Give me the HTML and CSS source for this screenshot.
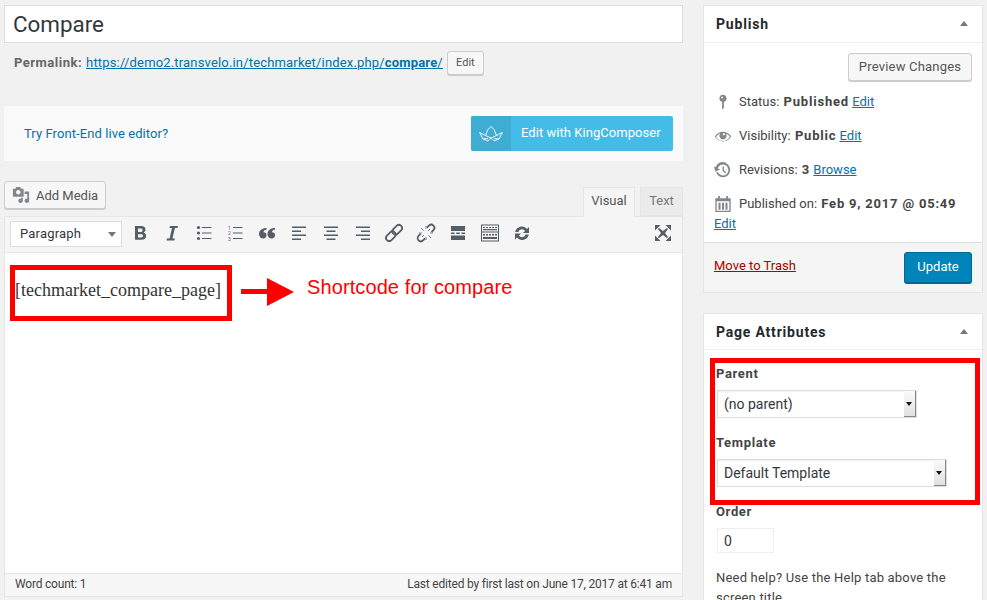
FILE: index.html
```html
<!DOCTYPE html>
<html lang="en">
<head>
<meta charset="utf-8">
<title>Edit Page</title>
<link rel="stylesheet" href="styles.css">
</head>
<body>
<div class="page">
  <main class="main">
    <input class="title" value="Compare" aria-label="Title">
    <div class="permalink">
      <strong class="perm-label">Permalink:</strong>
      <a class="link perm-url" href="#">https://demo2.transvelo.in/techmarket/index.php/<b>compare</b>/</a>
      <button class="btn btn-small">Edit</button>
    </div>
    <div class="kc-bar">
      <a class="kc-try" href="#">Try Front-End live editor?</a>
      <a class="kc-btn" href="#">
        <span class="kc-icon">
          <svg width="24" height="16" viewBox="0 0 24 16" fill="none" stroke="#fff" stroke-width=".9"><path d="M.6 6.500 6.500 9.500 8.800 3.800 12 .5 15.200 3.800 17.500 9.500 23.400 6.500 20 13 15 15 12 12 9 15 4 13Z"/><path d="M6.500 9.500 12 12 17.500 9.500M4 13 9 12.500M20 13 15 12.500"/></svg>
        </span>
        <span class="kc-text">Edit with KingComposer</span>
      </a>
    </div>
    <div class="editor-top">
      <button class="btn btn-media">
        <svg class="media-icon" viewBox="0 0 20 20"><path fill-rule="evenodd" d="M13 11V4c0-.55-.45-1-1-1h-1.670L9 1H5L3.670 3H2c-.55 0-1 .45-1 1v7c0 .55.45 1 1 1h10c.55 0 1-.45 1-1zM7 4.500c1.380 0 2.500 1.120 2.500 2.500S8.380 9.500 7 9.500 4.500 8.380 4.500 7 5.620 4.500 7 4.500zM14 6h5v10.500c0 1.380-1.120 2.500-2.500 2.500S14 17.880 14 16.500s1.120-2.500 2.500-2.500c.17 0 .34.020.5.050V9h-3V6zm-4 8.050V13h2v3.500c0 1.380-1.120 2.500-2.500 2.500S7 17.880 7 16.500 8.120 14 9.500 14c.17 0 .34.020.5.050z"/></svg>
        Add Media
      </button>
      <div class="tabs">
        <span class="tab tab-on">Visual</span>
        <span class="tab">Text</span>
      </div>
    </div>
    <div class="editor">
      <div class="toolbar">
        <div class="format">Paragraph<i class="tri"></i></div>
        <div class="tools">
          <svg class="ti" viewBox="0 0 20 20"><path d="M5 3h6.200c2.800 0 4.300 1.300 4.300 3.600 0 1.400-.7 2.500-2 3 1.700.4 2.600 1.600 2.600 3.300 0 2.400-1.700 3.800-4.600 3.800H5Zm3 2.500V9h2.700c1.200 0 1.800-.6 1.800-1.800 0-1.100-.6-1.700-1.800-1.700Zm0 5.800v3.100h3c1.300 0 2-.5 2-1.600 0-1-.7-1.500-2-1.500Z" fill-rule="evenodd"/></svg>
          <svg class="ti" viewBox="0 0 20 20"><path d="M8 3h8l-.5 2h-2.600l-2.500 10.500h2.500l-.5 2H4.500l.5-2h2.600L10 5H7.500Z"/></svg>
          <svg class="ti" viewBox="0 0 20 20"><circle cx="4.500" cy="4.500" r="1.600"/><circle cx="4.500" cy="10" r="1.600"/><circle cx="4.500" cy="15.500" r="1.600"/><path d="M8 4h9.500v1H8zM8 9.500h9.500v1H8zM8 15h9.500v1H8z"/></svg>
          <svg class="ti" viewBox="0 0 20 20"><path d="M8 4h9.500v1H8zM8 9.500h9.500v1H8zM8 15h9.500v1H8z"/><text class="num" x="3" y="6.500">1</text><text class="num" x="3" y="12">2</text><text class="num" x="3" y="17.500">3</text></svg>
          <svg class="ti" viewBox="0 0 20 20"><path d="M9.500 5v1.500C7 7 6.500 8 6.500 9.300c2 0 3 1 3 2.800 0 2-1.300 3.400-3.300 3.400C3.700 15.500 2 13.500 2 11c0-3.500 3-6 7.500-6ZM18 5v1.500c-2.500.5-3 1.500-3 2.800 2 0 3 1 3 2.800 0 2-1.300 3.400-3.300 3.400-2.500 0-4.200-2-4.200-4.500 0-3.500 3-6 7.500-6Z"/></svg>
          <svg class="ti" viewBox="0 0 20 20"><path d="M3 3.500h14v1.600H3zM3 7.500h9v1.600H3zM3 11.500h14v1.600H3zM3 15.500h9v1.600H3z"/></svg>
          <svg class="ti" viewBox="0 0 20 20"><path d="M3 3.500h14v1.600H3zM5.500 7.500h9v1.600h-9zM3 11.500h14v1.600H3zM5.500 15.500h9v1.600h-9z"/></svg>
          <svg class="ti" viewBox="0 0 20 20"><path d="M3 3.500h14v1.600H3zM8 7.500h9v1.600H8zM3 11.500h14v1.600H3zM8 15.500h9v1.600H8z"/></svg>
          <svg class="ti" viewBox="0 0 20 20"><g class="st" transform="rotate(-45 10 10)"><rect x="0" y="6.800" width="11" height="6.400" rx="3.200"/><rect x="9" y="6.800" width="11" height="6.400" rx="3.200"/></g></svg>
          <svg class="ti" viewBox="0 0 20 20"><g class="st" transform="rotate(-45 10 10)"><path d="M5.500 6.800H2.700a3.200 3.200 0 0 0 0 6.400h2.800M14.500 6.800h2.800a3.200 3.200 0 0 1 0 6.400h-2.800"/></g><path class="st st-thin" d="M7.500 7.500 5 5M12.500 12.500 15 15M10 6V3M10 14v3M6 10H3M14 10h3M12 8l2-2M8 12l-2 2"/></svg>
          <svg class="ti" viewBox="0 0 20 20"><path d="M3 3h14v5H3zM3 9.500h3.500v1.500H3zM8.200 9.500h3.600v1.500H8.200zM13.500 9.500H17v1.500h-3.500zM3 12.500h14V17H3z"/></svg>
          <svg class="ti" viewBox="0 0 20 20"><path d="M1 1.500h18v17H1Zm1 1v6h16v-6Zm0 7v8h16v-8ZM3 4h2v1H3zm3 0h2v1H6zm3 0h2v1H9zm3 0h2v1h-2zm3 0h2v1h-2zM3 6h14v1.300H3zM3 11h2v1.500H3zm3 0h2v1.500H6zm3 0h2v1.500H9zm3 0h2v1.500h-2zm3 0h2v1.500h-2zM3 14h14v2H3z" fill-rule="evenodd"/></svg>
          <svg class="ti" viewBox="0 0 20 20"><path d="M10 3.500c2 0 3.800 1 5 2.500l2-2v6h-6l2-2c-.7-1-1.800-1.700-3-1.700-1.700 0-3.100 1.100-3.600 2.700H3.300C3.800 5.800 6.600 3.500 10 3.500ZM3 10.500h6l-2 2c.7 1 1.800 1.700 3 1.700 1.700 0 3.100-1.100 3.600-2.700h3.100c-.5 3.200-3.300 5.500-6.700 5.500-2 0-3.800-1-5-2.500l-2 2Z"/></svg>
        </div>
        <svg class="ti ti-full" viewBox="0 0 18 18"><path d="M1 1h5.500L1 6.500ZM17 1v5.500L11.500 1ZM1 17v-5.500L6.500 17ZM17 17h-5.500l5.500-5.500ZM4 5l1-1 4 3 4-3 1 1-3 4 3 4-1 1-4-3-4 3-1-1 3-4Z"/></svg>
      </div>
      <div class="content">[techmarket_compare_page]</div>
      <div class="status">
        <span>Word count: 1</span>
        <span>Last edited by first last on June 17, 2017 at 6:41 am</span>
      </div>
      <div class="note-box"></div>
      <svg class="note-arrow" width="54" height="28" viewBox="0 0 54 28"><path d="M0 11h26V0l27 14-27 14V16H0Z" fill="#f00"/></svg>
      <div class="note-text">Shortcode for compare</div>
    </div>
  </main>
  <aside class="side">
    <section class="box">
      <header class="box-head"><h2>Publish</h2><i class="tri tri-up"></i></header>
      <div class="pub-body">
        <div class="preview-row"><button class="btn btn-preview">Preview Changes</button></div>
        <div class="pub-row">
          <svg class="pi" viewBox="0 0 20 20"><path fill-rule="evenodd" d="M14 6c0 1.860-1.280 3.410-3 3.860V16c0 1-2 2-2 2V9.860c-1.720-.45-3-2-3-3.860 0-2.210 1.790-4 4-4s4 1.790 4 4zM8 5c0 .55.450 1 1 1s1-.45 1-1-.45-1-1-1-1 .45-1 1z"/></svg>
          <span>Status: <b>Published</b> <a class="link" href="#">Edit</a></span>
        </div>
        <div class="pub-row">
          <svg class="pi" viewBox="0 0 20 20"><path fill-rule="evenodd" d="M18.300 9.500C15 4.900 8.500 3.800 3.900 7.200c-1.200.9-2.200 2.100-3 3.400.2.400.5.800.8 1.200 3.300 4.600 9.600 5.600 14.200 2.400.9-.7 1.700-1.400 2.400-2.400.3-.4.5-.8.8-1.200-.2-.4-.5-.8-.8-1.100zM10.100 7.200c.5-.5 1.300-.5 1.800 0s.5 1.300 0 1.800-1.300.5-1.800 0-.5-1.300 0-1.800zM10 15.500c-3.100 0-6-1.600-7.700-4.200C3.500 9 5.100 7.800 7 7c-.7.800-1 1.700-1 2.700 0 2.200 1.700 4.100 4 4.100s4-1.700 4-4c0-1-.3-2-1-2.700 1.900.8 3.500 2 4.700 3.600-1.700 2.800-4.600 4.800-7.700 4.800z"/></svg>
          <span>Visibility: <b>Public</b> <a class="link" href="#">Edit</a></span>
        </div>
        <div class="pub-row">
          <svg class="pi" viewBox="0 0 20 20"><path d="M13.650 2.880c3.930 2.010 5.480 6.830 3.470 10.770s-6.830 5.480-10.770 3.470c-1.870-.96-3.200-2.540-3.860-4.360l1.890-.65c.5 1.340 1.510 2.510 2.880 3.220 2.960 1.510 6.580.33 8.090-2.630 1.510-2.950.33-6.580-2.630-8.090-2.950-1.510-6.580-.33-8.090 2.630-.2.390-.35.790-.45 1.200l2.830.75L1.600 12 0 6.250l2.010.53c.15-.42.33-.85.56-1.270 2.010-3.930 6.830-5.480 10.770-3.470zM9.500 6H11v4.190l2.640 2.640-1.060 1.060L9.500 10.810V6z"/></svg>
          <span>Revisions: <b>3</b> <a class="link" href="#">Browse</a></span>
        </div>
        <div class="pub-row">
          <svg class="pi" viewBox="0 0 20 20"><path fill-rule="evenodd" d="M4.500 1h2v2.500h7V1h2v2.500h3V19h-17V3.500h3ZM3 7v10.500h14V7ZM5 8.500h2.300v8H5Zm3.850 0h2.300v8h-2.300Zm3.850 0H15v8h-2.300Z"/></svg>
          <span>Published on: <b>Feb 9, 2017 @ 05:49</b></span>
        </div>
        <a class="link date-edit" href="#">Edit</a>
      </div>
      <footer class="pub-foot">
        <a class="trash" href="#">Move to Trash</a>
        <button class="btn-primary">Update</button>
      </footer>
    </section>
    <section class="box box-attr">
      <header class="box-head attr-head"><h2>Page Attributes</h2><i class="tri tri-up"></i></header>
      <div class="attr-body">
        <div class="attr-label attr-first">Parent</div>
        <div class="select sel-parent">(no parent)<span class="spin"></span></div>
        <div class="attr-label attr-tpl">Template</div>
        <div class="select sel-tpl">Default Template<span class="spin"></span></div>
        <div class="attr-label attr-order">Order</div>
        <input class="order" value="0" aria-label="Order">
        <p class="help">Need help? Use the Help tab above the screen title.</p>
        <div class="note-box-2"></div>
      </div>
    </section>
  </aside>
</div>
</body>
</html>
```
FILE: styles.css
```css
* { box-sizing: border-box; }
html, body { margin: 0; height: 600px; overflow: hidden; }
body { background: #f1f1f1; color: #444; font: 13px/19px Roboto, sans-serif; }
.page { display: flex; gap: 20px; padding: 5px 4px 0; height: 600px; overflow: hidden; }
.main { width: 679px; flex: none; }
.side { width: 280px; flex: none; }
a { color: #0073aa; }
b, strong { font-weight: 700; }
button { font-family: inherit; }

.title { display: block; width: 100%; height: 38px; padding: 3px 8px; border: 1px solid #ddd; background: #fff; color: #32373c; font: 22.400px Roboto, sans-serif; outline: 0; }

.permalink { display: flex; align-items: center; gap: 4px; height: 26px; margin-top: 7px; padding-left: 10px; color: #666; }
.perm-label { letter-spacing: .5px; margin-bottom: 2px; }
.perm-url { letter-spacing: .17px; margin-bottom: 2px; }
.btn { border: 1px solid #ccc; border-radius: 3px; background: #f7f7f7; box-shadow: 0 1px 0 #ccc; color: #555; cursor: pointer; }
.btn-small { width: 37px; height: 24px; padding: 0; font-size: 11px; line-height: 20px; }

.kc-bar { display: flex; align-items: center; justify-content: space-between; height: 55px; margin-top: 30px; padding: 0 10px 0 20px; background: #fafafa; }
.kc-try { text-decoration: none; letter-spacing: .08px; }
.kc-btn { display: flex; width: 202px; height: 35px; border-radius: 2px; background: #43bde7; color: #fff; text-decoration: none; }
.kc-icon { display: flex; align-items: center; justify-content: center; width: 40px; background: #3fadd3; border-radius: 2px 0 0 2px; }
.kc-text { padding-left: 10px; line-height: 33px; letter-spacing: .05px; }

.editor-top { display: flex; justify-content: space-between; align-items: flex-end; height: 35px; margin-top: 20px; }
.btn-media { display: flex; align-items: center; gap: 6px; width: 102px; height: 28px; margin-bottom: 7px; padding: 0 0 0 7px; font-size: 13px; }
.media-icon { width: 18px; height: 18px; fill: #82878c; flex: none; }
.tabs { position: relative; z-index: 1; display: flex; align-items: flex-start; gap: 5px; }
.tab { width: 43px; height: 29px; border: 1px solid #e5e5e5; background: #ebebeb; color: #777; line-height: 26px; text-align: center; }
.tab-on { width: 52px; height: 30px; margin-bottom: -1px; background: #f5f5f5; border-bottom-color: #f5f5f5; color: #555; }

.editor { position: relative; height: 381px; border: 1px solid #e5e5e5; background: #fff; }
.toolbar { display: flex; align-items: center; height: 36px; padding: 0 5px 2px; background: #f5f5f5; border-bottom: 1px solid #e5e5e5; }
.format { position: relative; width: 112px; height: 26px; padding-left: 9px; background: #fff; border: 1px solid #ddd; color: #32373c; line-height: 24px; letter-spacing: .2px; }
.tri { position: absolute; right: 5px; top: 10px; width: 0; height: 0; border: 4.500px solid transparent; border-top: 5px solid #72777c; border-bottom: 0; }
.tools { display: flex; align-items: center; gap: 11.800px; margin: -1px 0 0 8px; }
.ti { display: block; width: 20px; height: 20px; fill: #555d66; flex: none; }
.ti-full { margin: -1px 5px 0 auto; width: 18px; height: 18px; }
.st { fill: none; stroke: #555d66; stroke-width: 1.800; }
.st-thin { stroke-width: 1; opacity: .75; }
.num { font: 5px Roboto, sans-serif; fill: #555d66; }
.content { height: 320px; padding: 25px 10px 0; color: #333; font: 18px/24px "Liberation Serif", serif; }
.status { display: flex; justify-content: space-between; height: 23px; padding: 0 10px; background: #f7f7f7; border-top: 1px solid #e5e5e5; color: #444; font-size: 12px; line-height: 21px; letter-spacing: -.2px; }
.note-box { position: absolute; left: 5px; top: 48px; width: 222px; height: 56px; border: 5px solid #f00; }
.note-arrow { position: absolute; left: 236px; top: 61px; }
.note-text { position: absolute; left: 302px; top: 57px; color: #f00; font: 20px/26px "Liberation Sans", sans-serif; letter-spacing: .1px; }

.box { background: #fff; border: 1px solid #e5e5e5; }
.box-head { position: relative; display: flex; align-items: center; height: 37px; padding-left: 12px; border-bottom: 1px solid #eee; }
.box-head h2 { margin: 0; color: #23282d; font-size: 14px; font-weight: 700; letter-spacing: .8px; }
.tri-up { top: 15px; right: 14px; border: 4px solid transparent; border-bottom: 5px solid #72777c; border-top: 0; }
.pub-body { padding: 10px 10px 6px; height: 199px; }
.preview-row { display: flex; justify-content: flex-end; }
.btn-preview { width: 124px; height: 28px; padding: 0 0 2px; font-size: 13px; letter-spacing: .2px; }
.pub-row { display: flex; align-items: center; gap: 7px; height: 19px; margin-top: 15px; }
.preview-row + .pub-row { margin-top: 11px; }
.pub-row b { letter-spacing: .8px; margin-left: 1px; }
.pi { width: 18px; height: 18px; fill: #82878c; flex: none; }
.date-edit { display: block; margin-top: 1px; }
.pub-foot { display: flex; align-items: center; justify-content: space-between; height: 50px; padding: 0 10px; background: #f5f5f5; border-top: 1px solid #ddd; }
.trash { color: #a00; margin-bottom: 4px; }
.btn-primary { width: 68px; height: 31px; padding: 0 0 2px; border: 1px solid #006799; border-radius: 3px; background: #0085ba; box-shadow: 0 1px 0 #006799; color: #fff; font-size: 13px; }

.box-attr { margin-top: 20px; }
.attr-head { height: 36px; padding-top: 1px; }
.attr-body { position: relative; padding: 0 12px; }
.attr-label { color: #444; font-weight: 700; letter-spacing: .65px; }
.attr-first { margin-top: 14px; }
.select { position: relative; height: 28px; margin-left: 1px; padding-left: 6px; background: #fff; border: 1px solid #ddd; color: #32373c; font-size: 14px; line-height: 26px; box-shadow: inset 0 1px 2px rgba(0,0,0,.07); }
.sel-parent { width: 200px; margin-top: 7px; }
.sel-tpl { width: 230px; margin-top: 7px; }
.attr-tpl { margin-top: 15px; }
.attr-order { margin-top: 15px; }
.spin { position: absolute; right: 0; top: 0; width: 12px; height: 26px; background: linear-gradient(#fafafa, #e0e0e0); border-right: 1px solid #888; border-bottom: 1px solid #888; }
.spin::after { content: ""; position: absolute; left: 2px; top: 11px; border: 3px solid transparent; border-top: 4px solid #111; border-bottom: 0; }
.order { display: block; width: 57px; height: 25px; margin: 7px 0 0 1px; padding: 0 6px; background: #fff; border: 1px solid #eee; color: #32373c; font: 14px Roboto, sans-serif; }
.help { margin: 15px 0 0; line-height: 20px; letter-spacing: .2px; }
.note-box-2 { position: absolute; left: 6px; top: -6px; width: 270px; height: 147px; border: 5px solid #f00; }
```
